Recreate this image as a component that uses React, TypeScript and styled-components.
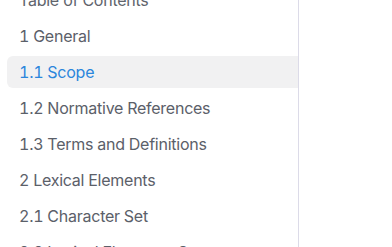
import React from 'react';
import styled, { createGlobalStyle } from 'styled-components';

const GlobalStyle = createGlobalStyle`
  html, body {
    margin: 0;
    padding: 0;
    background: #ffffff;
    overflow: hidden;
  }
  body {
    font-family: 'Inter', 'Liberation Sans', sans-serif;
  }
`;

const Page = styled.div`
  display: flex;
  height: 247px;
`;

const Sidebar = styled.nav`
  width: 299px;
  flex-shrink: 0;
  height: 100%;
  border-right: 1px solid #dcdbe8;
  box-sizing: border-box;
  overflow: hidden;
`;

const List = styled.ul`
  list-style: none;
  margin: -16px 0 0 0;
  padding: 0 0 0 7px;
  display: flex;
  flex-direction: column;
  gap: 4px;
`;

const Title = styled.li`
  padding: 6px 12px;
  line-height: 20px;
  color: #60646c;
  font-size: 16px;
  letter-spacing: -0.25px;
`;

const Item = styled.li<{ $active?: boolean }>`
  padding: 6px 12px;
  line-height: 20px;
  border-radius: 6px 0 0 6px;
  font-size: 16px;
  letter-spacing: -0.25px;
  font-feature-settings: 'tnum';
  color: ${(p) => (p.$active ? '#2b86dc' : '#5b6069')};
  background: ${(p) => (p.$active ? '#f1f1f2' : 'transparent')};
`;

const Content = styled.main`
  flex: 1;
`;

const entries = [
  '1 General',
  '1.1 Scope',
  '1.2 Normative References',
  '1.3 Terms and Definitions',
  '2 Lexical Elements',
  '2.1 Character Set',
  '2.2 Lexical Elements, Separators, and Delimiters',
];

const App = () => (
  <>
    <GlobalStyle />
    <Page>
      <Sidebar>
        <List>
          <Title>Table of Contents</Title>
          {entries.map((e) => (
            <Item key={e} $active={e === '1.1 Scope'}>
              {e}
            </Item>
          ))}
        </List>
      </Sidebar>
      <Content />
    </Page>
  </>
);

export default App;
